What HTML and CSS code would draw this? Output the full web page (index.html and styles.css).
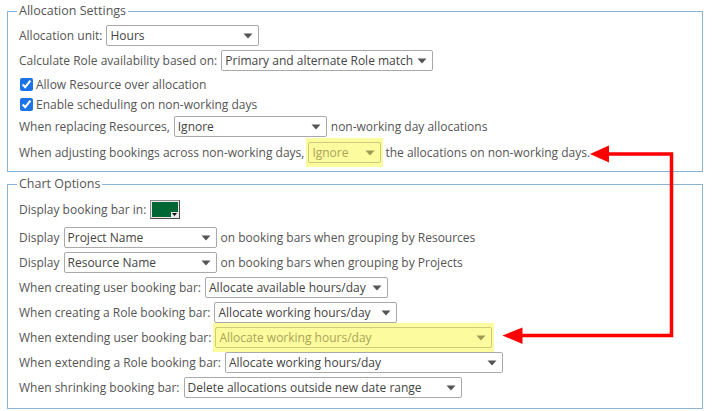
FILE: index.html
```html
<!DOCTYPE html>
<html>
<head>
<meta charset="utf-8">
<link rel="stylesheet" href="styles.css">
</head>
<body>
<div class="page">
  <fieldset class="group group-alloc">
    <legend>Allocation Settings</legend>
    <div class="row r1">
      <span>Allocation unit:</span>
      <div class="select w153"><span>Hours</span><svg class="caret" width="10" height="6" viewBox="0 0 10 6"><path d="M0.5 0.5H9.5L5 5.5Z"/></svg></div>
    </div>
    <div class="row">
      <span>Calculate Role availability based on:</span>
      <div class="select w212"><span>Primary and alternate Role match</span><svg class="caret" width="10" height="6" viewBox="0 0 10 6"><path d="M0.5 0.5H9.5L5 5.5Z"/></svg></div>
    </div>
    <label class="row check c1"><input type="checkbox" checked><span>Allow Resource over allocation</span></label>
    <label class="row check c2"><input type="checkbox" checked><span>Enable scheduling on non-working days</span></label>
    <div class="row r5">
      <span>When replacing Resources,</span>
      <div class="select w153"><span>Ignore</span><svg class="caret" width="10" height="6" viewBox="0 0 10 6"><path d="M0.5 0.5H9.5L5 5.5Z"/></svg></div>
      <span>non-working day allocations</span>
    </div>
    <div class="row r6">
      <span>When adjusting bookings across non-working days,</span>
      <span class="hl"><span class="select w73"><span>Ignore</span><svg class="caret" width="10" height="6" viewBox="0 0 10 6"><path d="M0.5 0.5H9.5L5 5.5Z"/></svg></span></span>
      <span>the allocations on non-working days.</span>
    </div>
  </fieldset>

  <fieldset class="group group-chart">
    <legend>Chart Options</legend>
    <div class="row swatch-row">
      <span>Display booking bar in:</span>
      <span class="swatch"><span class="swatch-fill"></span><svg class="swatch-caret" width="5" height="3" viewBox="0 0 5 3"><path d="M0 0H5L2.5 3Z"/></svg></span>
    </div>
    <div class="row">
      <span>Display</span>
      <div class="select w153"><span>Project Name</span><svg class="caret" width="10" height="6" viewBox="0 0 10 6"><path d="M0.5 0.5H9.5L5 5.5Z"/></svg></div>
      <span>on booking bars when grouping by Resources</span>
    </div>
    <div class="row">
      <span>Display</span>
      <div class="select w153"><span>Resource Name</span><svg class="caret" width="10" height="6" viewBox="0 0 10 6"><path d="M0.5 0.5H9.5L5 5.5Z"/></svg></div>
      <span>on booking bars when grouping by Projects</span>
    </div>
    <div class="row">
      <span>When creating user booking bar:</span>
      <div class="select w183"><span>Allocate available hours/day</span><svg class="caret" width="10" height="6" viewBox="0 0 10 6"><path d="M0.5 0.5H9.5L5 5.5Z"/></svg></div>
    </div>
    <div class="row">
      <span>When creating a Role booking bar:</span>
      <div class="select w183"><span>Allocate working hours/day</span><svg class="caret" width="10" height="6" viewBox="0 0 10 6"><path d="M0.5 0.5H9.5L5 5.5Z"/></svg></div>
    </div>
    <div class="row">
      <span>When extending user booking bar:</span>
      <span class="hl"><span class="select w277"><span>Allocate working hours/day</span><svg class="caret" width="10" height="6" viewBox="0 0 10 6"><path d="M0.5 0.5H9.5L5 5.5Z"/></svg></span></span>
    </div>
    <div class="row">
      <span>When extending a Role booking bar:</span>
      <div class="select w278"><span>Allocate working hours/day</span><svg class="caret" width="10" height="6" viewBox="0 0 10 6"><path d="M0.5 0.5H9.5L5 5.5Z"/></svg></div>
    </div>
    <div class="row">
      <span>When shrinking booking bar:</span>
      <div class="select w278"><span>Delete allocations outside new date range</span><svg class="caret" width="10" height="6" viewBox="0 0 10 6"><path d="M0.5 0.5H9.5L5 5.5Z"/></svg></div>
    </div>
  </fieldset>

  <svg class="arrows" width="717" height="411" viewBox="0 0 717 411">
    <polyline points="606,154 671.5,154 671.5,335.5 520,335.5" fill="none" stroke="#ff0000" stroke-width="3.5"/>
    <polygon points="590,154 609,145.5 609,162.5" fill="#ff0000"/>
    <polygon points="502.5,335.5 522.5,327.5 522.5,344" fill="#ff0000"/>
  </svg>
</div>
</body>
</html>
```

FILE: styles.css
```css
html, body {
  margin: 0;
  padding: 0;
  background: #ffffff;
}

body {
  font-family: "Open Sans", "Liberation Sans", sans-serif;
  font-size: 12px;
  color: #555555;
}

.page {
  position: relative;
  width: 717px;
  height: 411px;
  padding: 2px 0 0 7px;
  box-sizing: border-box;
}

.group {
  width: 696px;
  box-sizing: border-box;
  margin: 0;
  border: 1px solid #8ab4d4;
  padding: 5px 11px 8px 11px;
  min-inline-size: 0;
}

.group-chart {
  margin-top: 3px;
  padding-top: 6px;
  padding-bottom: 10px;
}

legend {
  padding: 0 2px;
  margin-left: -2px;
  line-height: 18px;
  font-size: 12.5px;
  color: #555555;
}

.row {
  display: flex;
  align-items: center;
  gap: 4px;
  height: 21px;
  margin-top: 4px;
  white-space: nowrap;
}

.row.r1 {
  margin-top: 0;
}

.row.check {
  height: 18px;
  gap: 3px;
}

.row.c2 {
  margin-top: 2px;
}

.row.r5 {
  margin-top: 3px;
}

.row.r6 {
  margin-top: 5px;
}

.row.check input {
  width: 13px;
  height: 13px;
  margin: 0 0 0 1px;
  accent-color: #1a73e8;
}

.select {
  display: flex;
  align-items: center;
  justify-content: space-between;
  height: 21px;
  box-sizing: border-box;
  border: 1px solid #a9a9a9;
  border-radius: 2px;
  background: #ffffff;
  color: #444444;
  padding: 0 5px 0 3px;
}

.caret {
  fill: #555555;
  flex: none;
}

.w73 { width: 73px; }
.w153 { width: 153px; }
.w183 { width: 183px; }
.w212 { width: 212px; }
.w277 { width: 277px; }
.w278 { width: 278px; }

.hl {
  display: flex;
  background: #fcfb9d;
  padding: 4px 2px;
  margin: -4px -2px;
}

.hl .select {
  background: transparent;
  border-color: #cfcb7c;
  color: #aaa45a;
}

.hl .caret {
  fill: #9d9a55;
}

.swatch-row {
  height: 20px;
  margin-top: 0;
  margin-bottom: 8px;
}

.swatch {
  position: relative;
  display: block;
  width: 30px;
  height: 19px;
  box-sizing: border-box;
  border: 1px solid #4a4a4a;
  border-top-color: #8a8a8a;
  border-left-color: #8a8a8a;
  background: #e8e8e8;
  padding: 1px;
}

.swatch-fill {
  display: block;
  width: 100%;
  height: 100%;
  background: #006633;
}

.swatch-caret {
  position: absolute;
  right: 1px;
  bottom: 1px;
  fill: #000000;
  background: #e8e8e8;
  padding: 1px;
}

.arrows {
  position: absolute;
  top: 0;
  left: 0;
  pointer-events: none;
}
```
